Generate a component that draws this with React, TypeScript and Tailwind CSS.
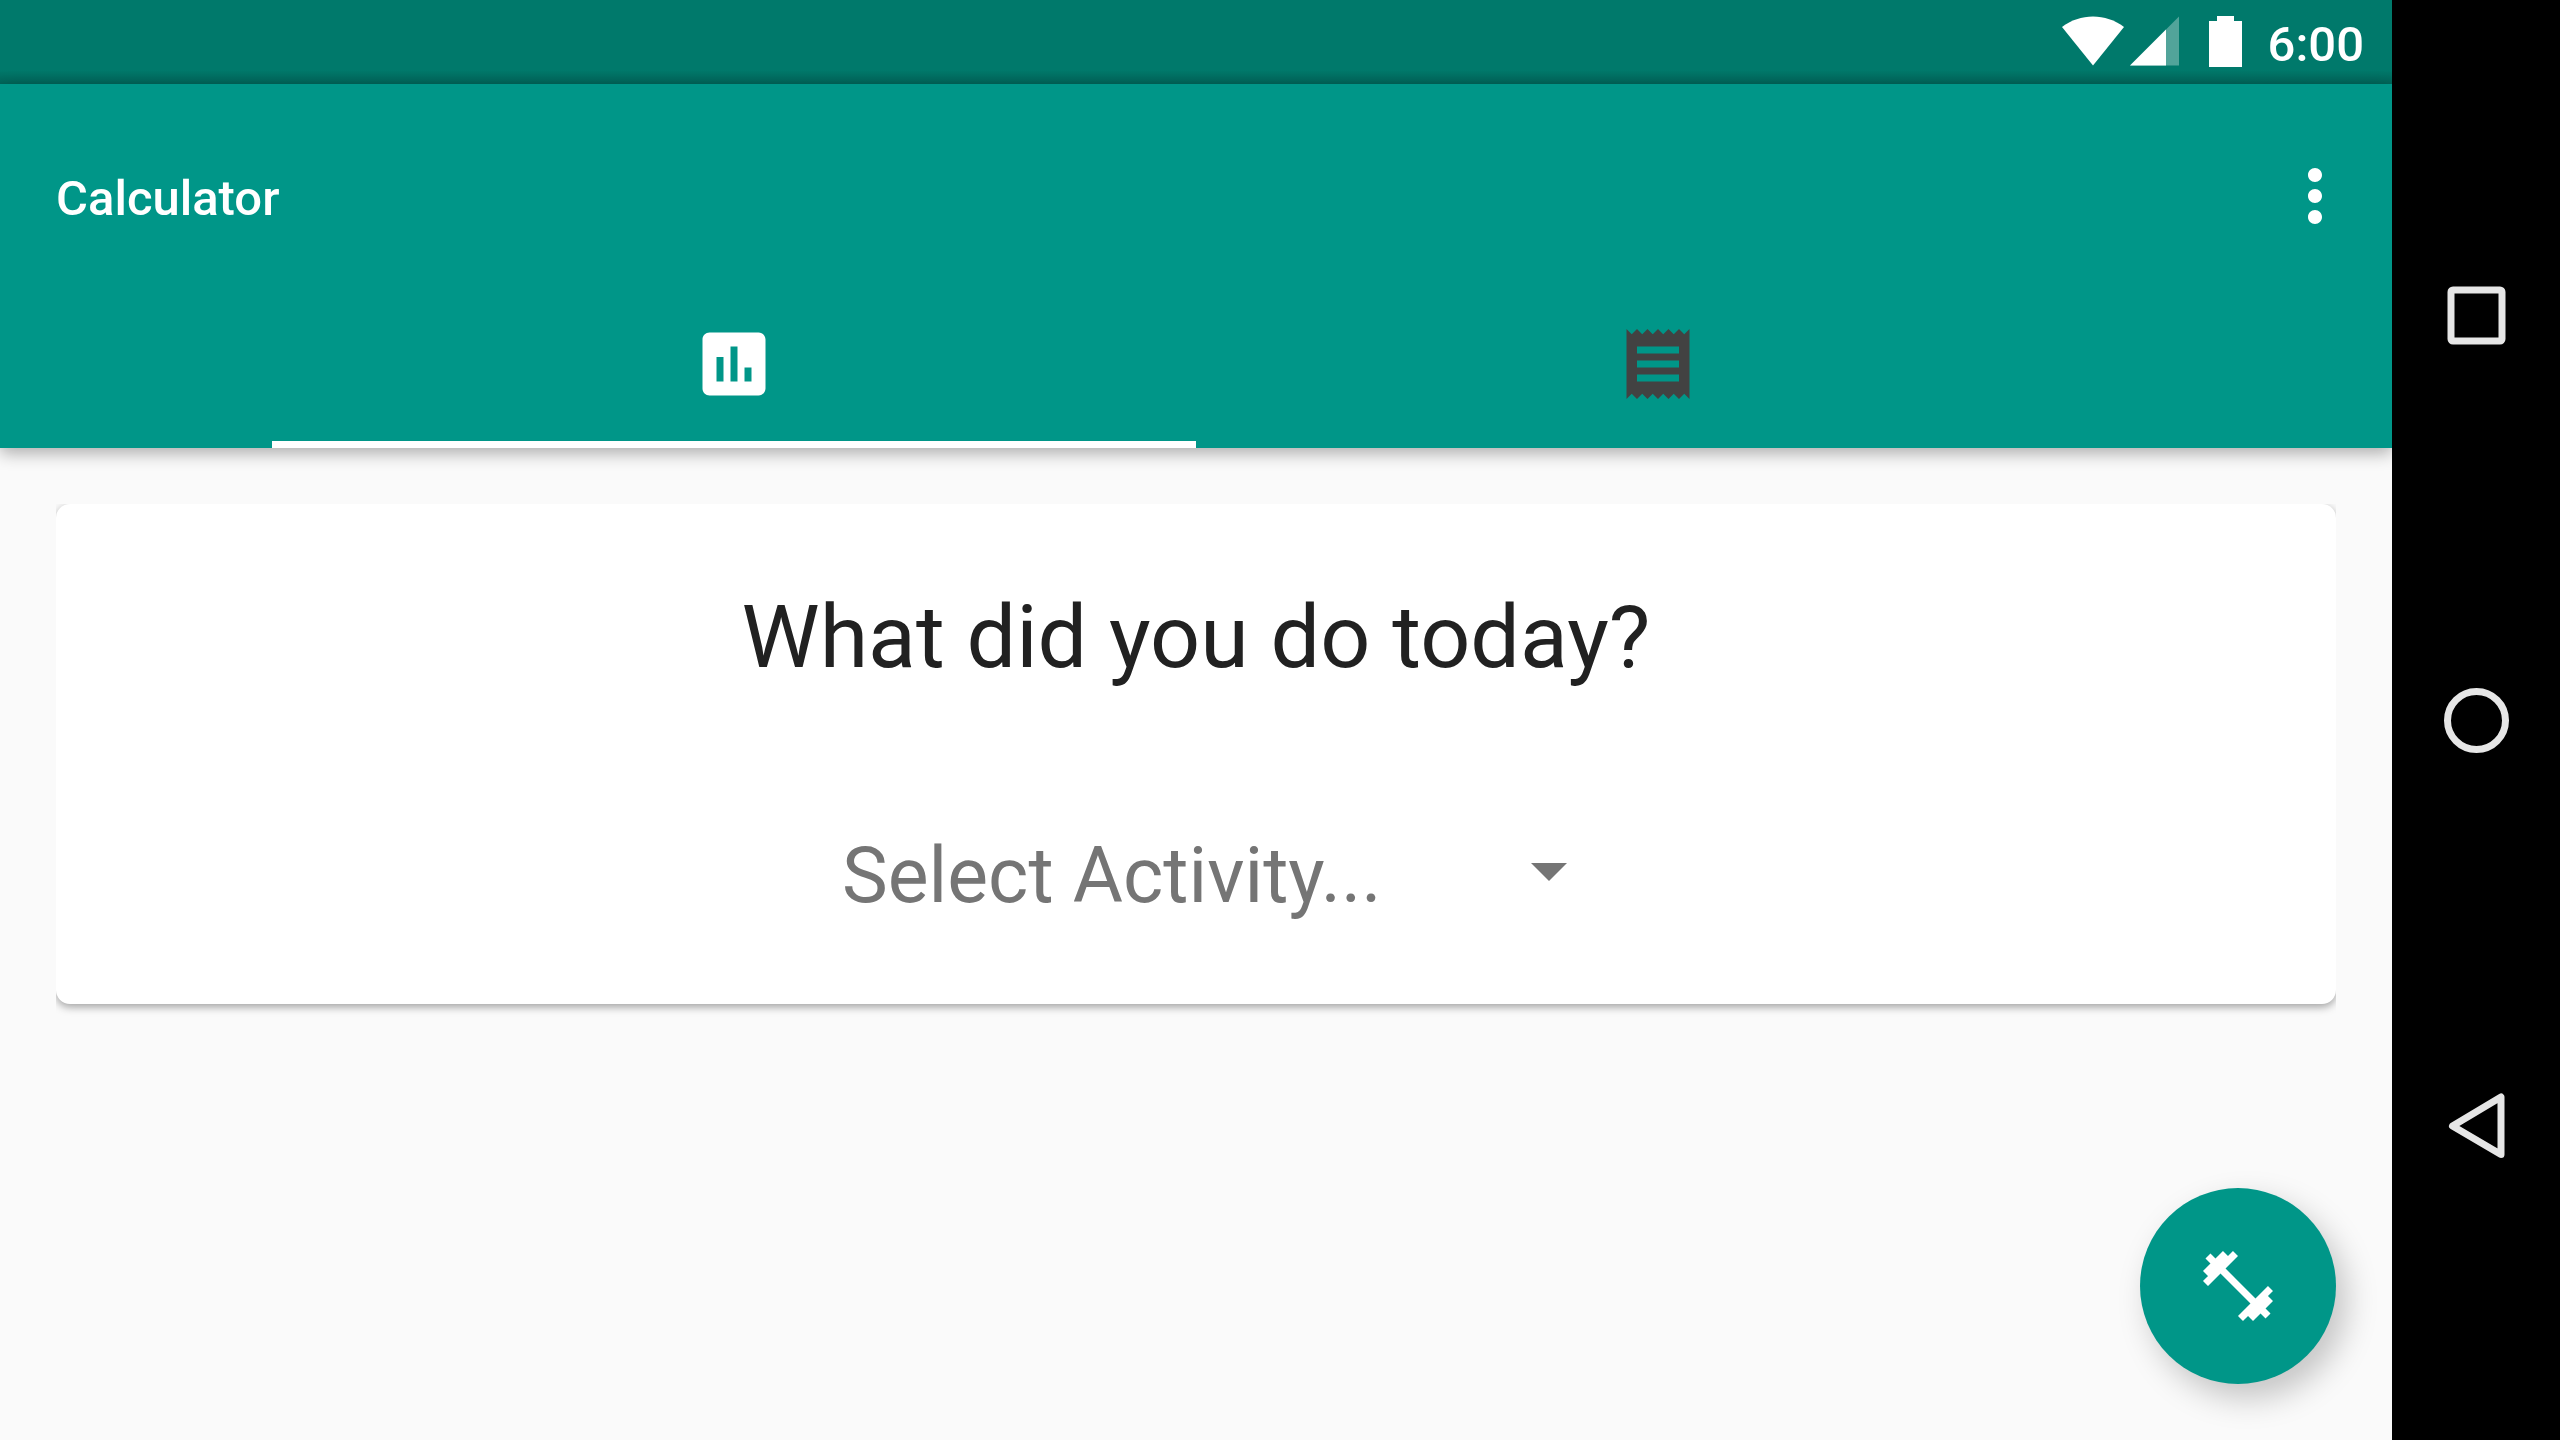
import { useState } from "react";
import type { ReactNode } from "react";

function Icon({ path, className }: { path: string; className: string }) {
  return (
    <svg viewBox="0 0 24 24" fill="currentColor" aria-hidden="true" className={className}>
      <path d={path} />
    </svg>
  );
}

const CHART =
  "M19 3H5c-1.1 0-2 .9-2 2v14c0 1.1.9 2 2 2h14c1.1 0 2-.9 2-2V5c0-1.1-.9-2-2-2zM9 17H7v-7h2v7zm4 0h-2V7h2v10zm4 0h-2v-4h2v4z";
const RECEIPT =
  "M18 17H6v-2h12v2zm0-4H6v-2h12v2zm0-4H6V7h12v2zM3 22l1.5-1.5L6 22l1.5-1.5L9 22l1.5-1.5L12 22l1.5-1.5L15 22l1.5-1.5L18 22l1.5-1.5L21 22V2l-1.5 1.5L18 2l-1.5 1.5L15 2l-1.5 1.5L12 2l-1.5 1.5L9 2 7.5 3.5 6 2 4.5 3.5 3 2v20z";
const MORE =
  "M12 8c1.1 0 2-.9 2-2s-.9-2-2-2-2 .9-2 2 .9 2 2 2zm0 2c-1.1 0-2 .9-2 2s.9 2 2 2 2-.9 2-2-.9-2-2-2zm0 6c-1.1 0-2 .9-2 2s.9 2 2 2 2-.9 2-2-.9-2-2-2z";
const DUMBBELL =
  "M20.57 14.86L22 13.43 20.57 12 17 15.57 8.43 7 12 3.43 10.57 2 9.14 3.43 7.71 2 5.57 4.14 4.14 2.71 2.71 4.14l1.43 1.43L2 7.71l1.43 1.43L2 10.57 3.43 12 7 8.43 15.57 17 12 20.57 13.43 22l1.43-1.43L16.29 22l2.14-2.14 1.43 1.43 1.43-1.43-1.43-1.43L22 16.29z";

function StatusBar() {
  return (
    <div className="flex h-[84px] items-center justify-end bg-[#00796b] bg-linear-to-t from-[#006559] to-[#00796b] to-[14px] pr-7 text-white">
      <div className="flex items-center pb-0.5">
        <svg viewBox="0 0 62 50" className="h-[50px] w-[62px]" fill="currentColor" aria-label="Wi-Fi">
          <path d="M31 49.500 0 11C9 4 20 .5 31 .5S53 4 62 11z" />
        </svg>
        <svg viewBox="0 0 49 50" className="ml-1.5 h-[50px] w-[49px]" fill="currentColor" aria-label="Mobile signal">
          <path d="M0 49.500H49V.5z" opacity="0.32" />
          <path d="M0 49.500H36V13.500z" />
        </svg>
        <svg viewBox="0 0 33 51" className="ml-[30px] h-[51px] w-[33px]" fill="currentColor" aria-label="Battery">
          <path d="M8 0H25V5H33V51H0V5H8z" />
        </svg>
      </div>
      <span className="ml-[26px] pt-1 text-[49px] leading-none font-medium">6:00</span>
    </div>
  );
}

function Tab({
  label,
  path,
  selected,
  onSelect,
}: {
  label: string;
  path: string;
  selected: boolean;
  onSelect: () => void;
}) {
  return (
    <button
      type="button"
      role="tab"
      aria-label={label}
      aria-selected={selected}
      onClick={onSelect}
      className={
        selected
          ? "flex h-[168px] items-center justify-center border-y-7 border-t-transparent border-b-white text-white"
          : "flex h-[168px] items-center justify-center border-y-7 border-transparent text-[#424242]"
      }
    >
      <Icon path={path} className="size-[84px]" />
    </button>
  );
}

function NavButton({ label, children }: { label: string; children: ReactNode }) {
  return (
    <button type="button" aria-label={label} className="flex flex-1 items-center justify-center">
      <svg viewBox="0 0 84 84" className="size-[84px]" fill="none" stroke="#e6e6e6" strokeWidth="7" strokeLinejoin="round">
        {children}
      </svg>
    </button>
  );
}

export default function App() {
  const [tab, setTab] = useState(0);

  return (
    <div className="flex min-h-screen bg-[#fafafa] font-[Roboto,sans-serif]">
      <div className="relative flex min-w-0 flex-1 flex-col overflow-hidden">
        <StatusBar />
        <header className="bg-[#009688] shadow-[0_5px_16px_rgba(0,0,0,0.32)]">
          <div className="flex h-[196px] items-center justify-between pt-7 pr-[35px] pl-14 text-white">
            <h1 className="pt-1.5 text-[49px] font-medium">Calculator</h1>
            <button type="button" aria-label="More options">
              <Icon path={MORE} className="size-[84px]" />
            </button>
          </div>
          <div role="tablist" className="mx-auto grid max-w-[1848px] grid-cols-2">
            <Tab label="Calculator" path={CHART} selected={tab === 0} onSelect={() => setTab(0)} />
            <Tab label="Log" path={RECEIPT} selected={tab === 1} onSelect={() => setTab(1)} />
          </div>
        </header>

        <main className="px-14 pt-14">
          <div className="overflow-hidden pb-4">
            <section className="flex flex-col items-center rounded-[14px] bg-white pt-[81px] pb-[72px] shadow-[0_3px_9px_rgba(0,0,0,0.36)]">
              <h2 className="text-[88px] leading-[104px] text-[#212121]">
                <label htmlFor="activity">What did you do today?</label>
              </h2>
              <div className="relative mt-[131px] w-[764px] max-w-full">
                <select
                  id="activity"
                  className="h-28 w-full appearance-none bg-transparent pr-24 pl-7 text-[77px] leading-[112px] text-[#757575]"
                >
                  <option>Select Activity...</option>
                </select>
                <svg
                  viewBox="0 0 36 18"
                  aria-hidden="true"
                  className="pointer-events-none absolute top-[43px] right-[11px] h-[18px] w-9"
                >
                  <path d="M0 0H36L18 18z" fill="#757575" />
                </svg>
              </div>
            </section>
          </div>
        </main>

        <button
          type="button"
          aria-label="Add workout"
          className="absolute right-14 bottom-14 flex size-[196px] items-center justify-center rounded-full bg-[#009688] text-white shadow-[10px_14px_32px_rgba(0,0,0,0.22)]"
        >
          <Icon path={DUMBBELL} className="size-[84px]" />
        </button>
      </div>

      <nav aria-label="System" className="flex w-[168px] shrink-0 flex-col bg-black py-28">
        <NavButton label="Recent apps">
          <rect x="17" y="17" width="51" height="51" rx="2" />
        </NavButton>
        <NavButton label="Home">
          <circle cx="42.500" cy="42.500" r="29" />
        </NavButton>
        <NavButton label="Back">
          <path d="M67 14V71.500L18.500 43z" />
        </NavButton>
      </nav>
    </div>
  );
}
